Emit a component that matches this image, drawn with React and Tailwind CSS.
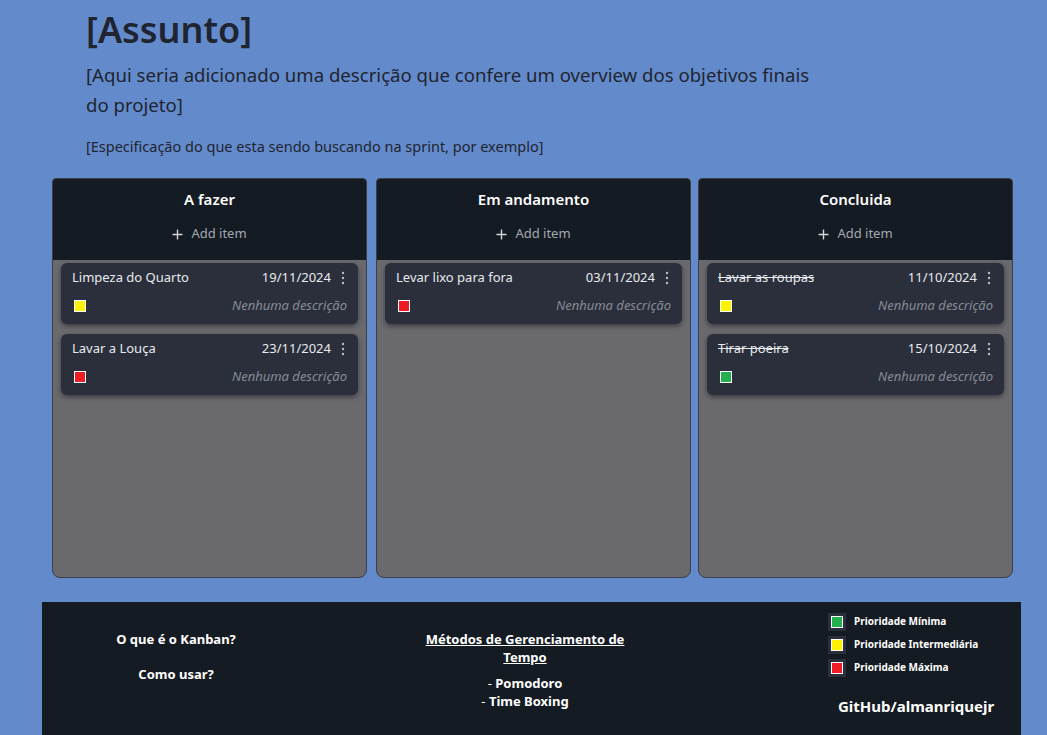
import React from "react";

const font = { fontFamily: '"Noto Sans", "Open Sans", sans-serif' };

const columns = [
  {
    title: "A fazer",
    cards: [
      { t: "Limpeza do Quarto", d: "19/11/2024", c: "bg-[#fff200]" },
      { t: "Lavar a Louça", d: "23/11/2024", c: "bg-[#ee1c25]" },
    ],
  },
  {
    title: "Em andamento",
    cards: [{ t: "Levar lixo para fora", d: "03/11/2024", c: "bg-[#ee1c25]" }],
  },
  {
    title: "Concluida",
    done: true,
    cards: [
      { t: "Lavar as roupas", d: "11/10/2024", c: "bg-[#fff200]" },
      { t: "Tirar poeira", d: "15/10/2024", c: "bg-[#22b14c]" },
    ],
  },
];

function Dots() {
  return (
    <svg width="4" height="14" viewBox="0 0 4 14" className="text-[#b9bcc4]">
      <circle cx="2" cy="2" r="1.2" fill="currentColor" />
      <circle cx="2" cy="7" r="1.2" fill="currentColor" />
      <circle cx="2" cy="12" r="1.2" fill="currentColor" />
    </svg>
  );
}

function Card({ card, done }) {
  return (
    <div className="h-[61px] rounded-[6px] bg-[#2a2f3b] shadow-[0_2px_5px_rgba(0,0,0,0.45)] px-[11px] pt-[5px] flex flex-col">
      <div className="flex items-center justify-between">
        <span className={`text-[13px] text-[#e8eaee] ${done ? "line-through" : ""}`}>{card.t}</span>
        <div className="flex items-center gap-[10px] pr-[2px]">
          <span className="text-[13px] text-[#e8eaee]">{card.d}</span>
          <Dots />
        </div>
      </div>
      <div className="flex items-center justify-between mt-[9px]">
        <span className={`ml-[2px] w-[12px] h-[12px] border border-white ${card.c}`}></span>
        <span className="text-[13px] italic text-[#868b95]">Nenhuma descrição</span>
      </div>
    </div>
  );
}

function Column({ col, className = "" }) {
  return (
    <div className={`w-[315px] shrink-0 h-[400px] flex flex-col rounded-t-[4px] rounded-b-[8px] border border-[#3b3f47] bg-[#6a696e] overflow-hidden ${className}`}>
      <div className="h-[81px] bg-[#151b23] flex flex-col items-center pt-[9px]">
        <div className="text-[15px] font-semibold text-white">{col.title}</div>
        <div className="mt-[14px] flex items-center gap-[8px] text-[13px] text-[#a3a8b1]">
          <svg width="11" height="11" viewBox="0 0 11 11">
            <path d="M5.5 0.5v10M0.5 5.5h10" stroke="#d4d6da" strokeWidth="1.4" />
          </svg>
          <span>Add item</span>
        </div>
      </div>
      <div className="flex flex-col gap-[10px] px-[8px] pt-[3px]">
        {col.cards.map((c) => (
          <Card key={c.t} card={c} done={col.done} />
        ))}
      </div>
    </div>
  );
}

function Legend({ c, label }) {
  return (
    <div className="flex items-center gap-[8px]">
      <span className="w-[18px] h-[18px] bg-[#2a2f3b] flex items-center justify-center">
        <span className={`w-[12px] h-[12px] border border-white ${c}`}></span>
      </span>
      <span className="text-[10px] font-bold text-white">{label}</span>
    </div>
  );
}

export default function App() {
  return (
    <div style={font} className="min-h-[735px] bg-[#638bcb] flex flex-col">
      <div className="pl-[86px] pt-[8px]">
        <h1 className="text-[36px] font-semibold leading-[44px] text-[#1f2430]">[Assunto]</h1>
        <p className="mt-[8px] w-[740px] text-[18.6px] leading-[30px] text-[#1f2430]">
          [Aqui seria adicionado uma descrição que confere um overview dos objetivos finais do projeto]
        </p>
        <p className="mt-[16px] text-[14.5px] text-[#1f2430]">
          [Especificação do que esta sendo buscando na sprint, por exemplo]
        </p>
      </div>
      <div className="mt-[20px] pl-[52px] flex">
        <Column col={columns[0]} />
        <Column col={columns[1]} className="ml-[9px]" />
        <Column col={columns[2]} className="ml-[7px]" />
      </div>
      <footer className="mt-[24px] ml-[42px] w-[979px] flex-1 bg-[#151b23] flex text-white">
        <div className="w-[268px] shrink-0 flex flex-col items-center pt-[28px] gap-[16px] text-[13px] font-bold">
          <span>O que é o Kanban?</span>
          <span>Como usar?</span>
        </div>
        <div className="w-[230px] shrink-0 ml-[100px] flex flex-col items-center pt-[28px] text-[13px] font-bold text-center">
          <span className="underline leading-[18px] w-[200px]">Métodos de Gerenciamento de Tempo</span>
          <span className="mt-[8px] leading-[18px]"><span className="font-normal">- </span>Pomodoro</span>
          <span className="leading-[18px]"><span className="font-normal">- </span>Time Boxing</span>
        </div>
        <div className="ml-[188px] shrink-0 pt-[11px] flex flex-col">
          <div className="flex flex-col gap-[5px]">
            <Legend c="bg-[#22b14c]" label="Prioridade Mínima" />
            <Legend c="bg-[#fff200]" label="Prioridade Intermediária" />
            <Legend c="bg-[#ee1c25]" label="Prioridade Máxima" />
          </div>
          <div className="mt-[18px] ml-[10px] text-[15px] font-bold">GitHub/almanriquejr</div>
        </div>
      </footer>
    </div>
  );
}
